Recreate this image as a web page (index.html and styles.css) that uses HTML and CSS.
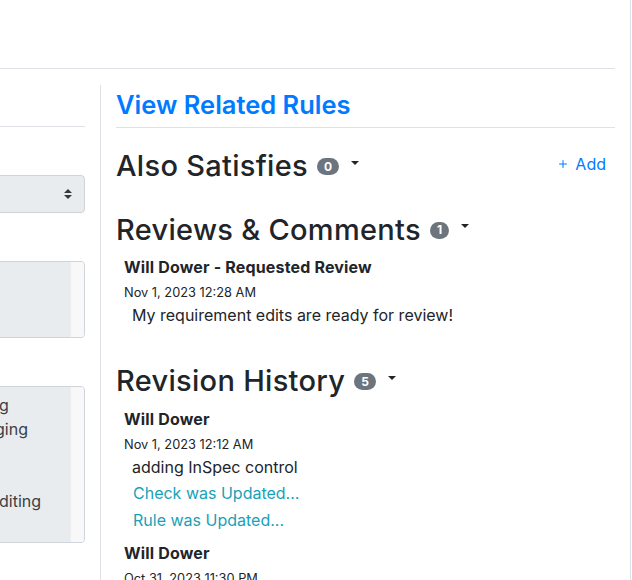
FILE: index.html
```html
<!DOCTYPE html>
<html lang="en">
<head>
<meta charset="utf-8">
<title>Rule Editor</title>
<link rel="stylesheet" href="styles.css">
</head>
<body>
<div class="page">
  <header class="topbar"></header>
  <div class="layout">
    <aside class="left-col">
      <div class="left-title"></div>
      <div class="field-gap"></div>
      <div class="select-box">
        <span class="select-value"></span>
        <svg class="select-arrows" viewBox="0 0 4 5" width="8" height="10"><path d="M2 0L0 2h4zm0 5L0 3h4z"/></svg>
      </div>
      <div class="field-gap"></div>
      <div class="textarea-box short">
        <div class="textarea-text"></div>
        <div class="scroll-gutter"></div>
      </div>
      <div class="field-gap"></div>
      <div class="textarea-box tall">
        <div class="textarea-text fragment">
          <div>g</div>
          <div class="shift">ging</div>
          <div>&nbsp;</div>
          <div>&nbsp;</div>
          <div>diting</div>
        </div>
        <div class="scroll-gutter"></div>
      </div>
    </aside>

    <main class="right-col">
      <h4 class="related-title"><a href="#">View Related Rules</a></h4>

      <section class="panel">
        <div class="panel-head">
          <h3 class="panel-title">Also Satisfies <span class="badge">0</span><span class="caret"></span></h3>
          <a class="add-link" href="#"><svg class="plus-icon" viewBox="0 0 16 16" width="16" height="16"><path d="M8 4a.5.5 0 0 1 .5.5v3h3a.5.5 0 0 1 0 1h-3v3a.5.5 0 0 1-1 0v-3h-3a.5.5 0 0 1 0-1h3v-3A.5.5 0 0 1 8 4z"/></svg>Add</a>
        </div>
      </section>

      <section class="panel">
        <div class="panel-head">
          <h3 class="panel-title">Reviews &amp; Comments <span class="badge">1</span><span class="caret"></span></h3>
        </div>
        <div class="entries">
          <div class="entry">
            <div class="entry-author">Will Dower - Requested Review</div>
            <small class="entry-date">Nov 1, 2023 12:28 AM</small>
            <div class="entry-body">My requirement edits are ready for review!</div>
          </div>
        </div>
      </section>

      <section class="panel">
        <div class="panel-head">
          <h3 class="panel-title">Revision History <span class="badge">5</span><span class="caret"></span></h3>
        </div>
        <div class="entries">
          <div class="entry">
            <div class="entry-author">Will Dower</div>
            <small class="entry-date">Nov 1, 2023 12:12 AM</small>
            <div class="entry-body">adding InSpec control</div>
            <a class="entry-link" href="#">Check was Updated...</a>
            <a class="entry-link" href="#">Rule was Updated...</a>
          </div>
          <div class="entry">
            <div class="entry-author">Will Dower</div>
            <small class="entry-date">Oct 31, 2023 11:30 PM</small>
          </div>
        </div>
      </section>
    </main>
  </div>
</div>
</body>
</html>
```
FILE: styles.css
```css
* { box-sizing: border-box; }

html, body { margin: 0; padding: 0; }

body {
  width: 632px;
  height: 580px;
  overflow: hidden;
  background: #fff;
  color: #212529;
  font-family: Inter, "Liberation Sans", sans-serif;
  font-size: 16px;
  line-height: 24px;
}

a { color: #007bff; text-decoration: none; }

.page {
  width: 631px;
  height: 580px;
  border-right: 1px solid #dee2e6;
}

.topbar {
  height: 69px;
  margin-right: 15px;
  border-bottom: 1px solid #dee2e6;
}

.layout {
  display: flex;
  margin-top: 16px;
  height: 495px;
}

/* left column (mostly cut off by the viewport edge) */
.left-col {
  flex: 0 0 301px;
  margin-left: -216px;
}

.left-title {
  height: 42px;
  border-bottom: 1px solid #dee2e6;
}

.field-gap { height: 48px; }

.select-box {
  height: 38px;
  display: flex;
  align-items: center;
  justify-content: space-between;
  padding: 0 12px;
  background: #e9ecef;
  border: 1px solid #ced4da;
  border-radius: 4px;
}

.select-arrows { fill: #343a40; }

.textarea-box {
  display: flex;
  background: #e9ecef;
  border: 1px solid #ced4da;
  border-radius: 4px;
  overflow: hidden;
}

.textarea-box.short { height: 77px; }
.textarea-box.tall { height: 157px; }

.textarea-text {
  flex: 1;
  padding: 6px 0 0;
  color: #495057;
}

.textarea-text.fragment {
  flex: 0 0 71px;
  margin-left: auto;
  color: #3a3f44;
}

.textarea-text .shift { margin-left: -4px; }

.scroll-gutter {
  flex: 0 0 14px;
  background: #f8f8f8;
  border-left: 1px solid #eeeeee;
}

/* right column */
.right-col {
  flex: 0 0 515px;
  margin-left: 15px;
  border-left: 1px solid #dee2e6;
  padding-left: 15px;
}

.related-title {
  margin: 0;
  padding: 5px 0 8px;
  line-height: 29px;
  font-size: 25.5px;
  font-weight: 600;
  border-bottom: 1px solid #dee2e6;
}

.panel { margin-top: 30px; }
.related-title + .panel { margin-top: 21px; }

.panel-head {
  display: flex;
  align-items: center;
  justify-content: space-between;
}

.panel-title {
  display: flex;
  align-items: center;
  margin: 0;
  font-size: 29px;
  letter-spacing: 0.3px;
  line-height: 33.6px;
  font-weight: 500;
}

.badge {
  margin-left: 9px;
  margin-top: 2px;
  padding: 2.5px 7px;
  border-radius: 10px;
  background: #6c757d;
  color: #fff;
  font-size: 12px;
  font-weight: 700;
  letter-spacing: 0;
  line-height: 12px;
}

.caret {
  margin-left: 12px;
  margin-bottom: 6px;
  width: 0;
  height: 0;
  border-top: 4px solid #212529;
  border-left: 4.25px solid transparent;
  border-right: 4.25px solid transparent;
}

.add-link {
  display: flex;
  align-items: center;
  margin-right: 9px;
  margin-bottom: 4px;
  gap: 4px;
  font-size: 16px;
  line-height: 24px;
}

.plus-icon { fill: currentColor; }

.entries { padding: 9px 0 7px; }

.entry { margin-left: 8px; }
.entry + .entry { margin-top: 9px; }

.entry-author {
  font-weight: 700;
  letter-spacing: 0.17px;
}

.entry-date {
  display: block;
  padding-top: 3px;
  font-size: 12.8px;
  line-height: 21px;
}

.entry-body { padding-left: 8px; }

.entry-link {
  display: block;
  margin-top: 2.5px;
  padding-left: 9px;
  color: #17a2b8;
}
```
